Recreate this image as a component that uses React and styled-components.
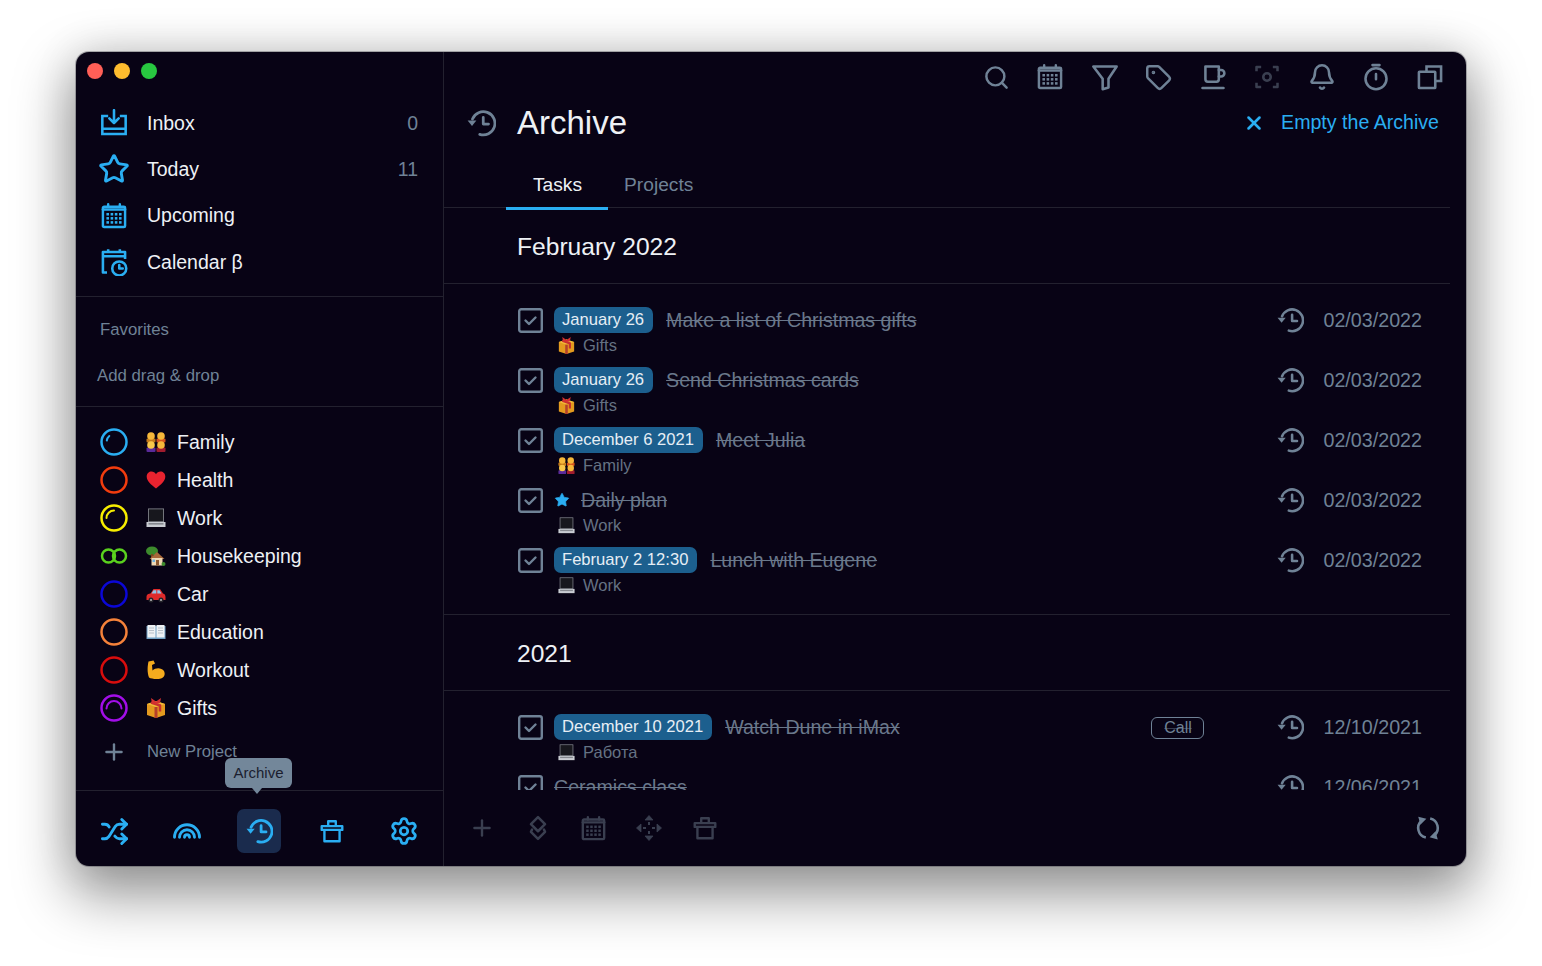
import React from "react";
import styled, { createGlobalStyle } from "styled-components";
import { Search, Tag, Bell, Plus, X, Shuffle, Rainbow, Settings, Star } from "lucide-react";

const BLUE = "#2aaef2";
const GREY = "#6f8296";
const DIM = "#3a3f50";
const LINE = "#23212f";
const BG = "#080315";

const Global = createGlobalStyle`
  html, body { margin: 0; padding: 0; background: #fff; }
  body { font-family: "Liberation Sans", Arial, sans-serif; overflow: hidden; }
  * { box-sizing: border-box; }
`;
const Page = styled.div`
  width: 1542px;
  height: 966px;
  padding: 52px 76px 100px;
`;
const Window = styled.div`
  width: 1390px;
  height: 814px;
  display: grid;
  grid-template-columns: 368px 1fr;
  background: ${BG};
  border-radius: 13px;
  box-shadow: 0 0 0 1px rgba(60, 60, 70, 0.35), 0 24px 56px 6px rgba(0, 0, 0, 0.4), 0 0 44px rgba(0, 0, 0, 0.12);
  overflow: hidden;
`;
const Sidebar = styled.aside`
  display: flex;
  flex-direction: column;
  border-right: 1px solid ${LINE};
  min-height: 0;
`;
const Lights = styled.div`
  height: 37px;
  padding-left: 11px;
  display: flex;
  align-items: center;
  gap: 11px;
`;
const Light = styled.span`
  width: 16px;
  height: 16px;
  border-radius: 50%;
  background: ${(p) => p.$c};
`;
const Nav = styled.nav`
  padding: 11px 0 11px;
  border-bottom: 1px solid ${LINE};
`;
const NavRow = styled.div`
  height: 46.3px;
  padding: 0 25px 0 24px;
  display: flex;
  align-items: center;
  color: #eef1f5;
  font-size: 19.5px;
  svg { flex: none; color: ${BLUE}; }
`;
const NavLabel = styled.span`
  margin-left: 19px;
  flex: 1;
`;
const StarSlot = styled.span`
  width: 28px;
  height: 28px;
  display: flex;
  align-items: center;
  justify-content: center;
  flex: none;
`;
const Count = styled.span`
  color: ${GREY};
  font-size: 19.5px;
`;
const Favorites = styled.section`
  padding: 10px 0 7px;
  border-bottom: 1px solid ${LINE};
`;
const FavRow = styled.div`
  height: 46px;
  display: flex;
  align-items: center;
  padding-left: ${(p) => p.$left}px;
  color: ${GREY};
  font-size: 16.8px;
`;
const Projects = styled.section`
  padding: 16px 0 0 24px;
  flex: 1;
`;
const ProjectRow = styled.div`
  height: 38px;
  display: flex;
  align-items: center;
  color: #eef1f5;
  font-size: 19.5px;
`;
const EmojiSlot = styled.span`
  width: 20px;
  height: 20px;
  margin-left: 18px;
  margin-right: 11px;
  display: inline-flex;
`;
const NewProject = styled.div`
  height: 38px;
  margin-top: 6px;
  display: flex;
  align-items: center;
  color: ${GREY};
  font-size: 16.7px;
  svg { margin: 0 20px 0 1px; }
`;
const BottomBar = styled.div`
  height: 76px;
  border-top: 1px solid ${LINE};
  padding: 18px 17px 0 16px;
  display: flex;
  justify-content: space-between;
  align-items: flex-start;
`;
const BarButton = styled.div`
  position: relative;
  width: 44px;
  height: 44px;
  border-radius: 7px;
  display: flex;
  align-items: center;
  justify-content: center;
  color: ${BLUE};
  background: ${(p) => (p.$active ? "#1a2b4d" : "transparent")};
`;
const Tooltip = styled.div`
  position: absolute;
  left: -12px;
  top: -51px;
  width: 67px;
  height: 30px;
  padding-bottom: 2px;
  border-radius: 6px;
  background: #73879a;
  color: #1b1e2f;
  font-size: 15px;
  display: flex;
  align-items: center;
  justify-content: center;
  &::after {
    content: "";
    position: absolute;
    left: 27px;
    bottom: -6px;
    border-left: 5px solid transparent;
    border-right: 5px solid transparent;
    border-top: 6px solid #73879a;
  }
`;
const Main = styled.main`
  display: flex;
  flex-direction: column;
  min-height: 0;
  min-width: 0;
`;
const TopBar = styled.div`
  height: 50px;
  padding-right: 22px;
  display: flex;
  justify-content: flex-end;
  align-items: center;
  gap: 26.25px;
  color: ${GREY};
`;
const TopIcon = styled.span`
  width: 28px;
  height: 28px;
  display: flex;
  align-items: center;
  justify-content: center;
  color: ${(p) => (p.$dim ? DIM : GREY)};
`;
const Header = styled.header`
  height: 42px;
  padding: 0 27px 0 22px;
  display: flex;
  align-items: center;
  color: ${GREY};
`;
const Title = styled.h1`
  margin: 0 0 0 21px;
  flex: 1;
  font-size: 33px;
  font-weight: 400;
  color: #eef1f5;
`;
const EmptyAction = styled.div`
  display: flex;
  align-items: center;
  gap: 16px;
  color: ${BLUE};
  font-size: 19.6px;
  margin-top: -1px;
`;
const Tabs = styled.div`
  margin: 18px 16px 0 0;
  height: 46px;
  padding-left: 62px;
  display: flex;
  border-bottom: 1px solid ${LINE};
`;
const TabItem = styled.div`
  height: 48px;
  padding: ${(p) => (p.$active ? "0 26px 0 27px" : "0 16px 0")};
  display: flex;
  align-items: center;
  font-size: 19.2px;
  color: ${(p) => (p.$active ? "#eef1f5" : GREY)};
  border-bottom: 3px solid ${(p) => (p.$active ? BLUE : "transparent")};
`;
const Scroll = styled.div`
  flex: 1;
  min-height: 0;
  overflow: hidden;
  padding-right: 16px;
`;
const SectionHead = styled.h2`
  margin: 0;
  height: 76px;
  padding: 3px 0 0 73px;
  display: flex;
  align-items: center;
  font-size: 24.6px;
  font-weight: 400;
  color: #eef1f5;
  border-bottom: 1px solid ${LINE};
`;
const Rows = styled.div`
  padding: 23px 28px 7px 74px;
  border-bottom: ${(p) => (p.$last ? "none" : `1px solid ${LINE}`)};
`;
const Row = styled.div`
  height: 60px;
  display: flex;
  align-items: flex-start;
`;
const Check = styled.span`
  width: 25px;
  height: 26px;
  margin-right: 11px;
  flex: none;
  display: flex;
  align-items: center;
  color: ${GREY};
`;
const Body = styled.div`
  flex: 1;
  min-width: 0;
`;
const TopLine = styled.div`
  height: 26px;
  display: flex;
  align-items: center;
  gap: 13px;
`;
const Pill = styled.span`
  height: 26px;
  padding: 0 9px 0 8px;
  border-radius: 7px;
  background: #1c5f8e;
  color: #e6eef5;
  font-size: 16.6px;
  display: flex;
  align-items: center;
`;
const StarMark = styled.span`
  width: 16px;
  display: flex;
  color: ${BLUE};
  margin-right: -2px;
`;
const TaskTitle = styled.span`
  font-size: 19.6px;
  color: #6a788b;
  text-decoration: line-through;
`;
const SubLine = styled.div`
  height: 24px;
  padding-left: 4px;
  display: flex;
  align-items: center;
  gap: 8px;
  font-size: 16.5px;
  color: #657283;
`;
const TagChip = styled.span`
  width: 53px;
  height: 22px;
  margin: 3px 72px 0 0;
  flex: none;
  border: 1.5px solid ${GREY};
  border-radius: 6px;
  color: ${GREY};
  font-size: 16px;
  display: flex;
  align-items: center;
  justify-content: center;
  text-decoration: line-through;
  text-decoration-color: rgba(111, 130, 150, 0.45);
`;
const Done = styled.div`
  height: 26px;
  flex: none;
  display: flex;
  align-items: center;
  gap: 19px;
  color: ${GREY};
  font-size: 19.7px;
`;
const Toolbar = styled.div`
  height: 76px;
  padding: 0 25px;
  display: flex;
  align-items: center;
  gap: 29.7px;
  color: ${DIM};
`;
const ToolIcon = styled.span`
  width: 26px;
  height: 26px;
  display: flex;
  align-items: center;
  justify-content: center;
`;
const Refresh = styled.span`
  margin-left: auto;
  display: flex;
  color: ${GREY};
`;

const Svg = ({ s = 28, sw = 2.2, children, vb = 24 }) => (
  <svg width={s} height={s} viewBox={`0 0 ${vb} ${vb}`} fill="none" stroke="currentColor" strokeWidth={sw} strokeLinecap="round" strokeLinejoin="round" style={{ flex: "none" }}>
    {children}
  </svg>
);
const HistoryIcon = ({ s = 28, sw = 2.2 }) => (
  <Svg s={s} sw={sw}>
    <path d="M5.2 8.800A9.300 9.300 0 1 1 11 21.100" />
    <path d="M1.300 10h7l-3.500 4.300z" fill="currentColor" stroke="none" />
    <path d="M13.800 7.500v5.300h4.200" />
  </Svg>
);
const InboxIcon = () => (
  <Svg s={28}>
    <path d="M7 6H2v15.500h20V6h-5" strokeLinecap="butt" strokeLinejoin="miter" />
    <path d="M2 17h20" strokeLinecap="butt" />
    <path d="M12 1v10M8 8l4 4 4-4" />
  </Svg>
);
const CalGrid = ({ s = 28, sw = 2.1 }) => (
  <Svg s={s} sw={sw}>
    <rect x="2.500" y="4" width="19" height="17.500" rx="1" />
    <path d="M7 2v2M17 2v2" />
    <path d="M2.500 6.500h19" />
    <g fill="currentColor" stroke="none">
      {[6.600, 10.200, 13.800, 17.400].map((x) => [10.500, 14, 17.500].map((y) => <rect key={x + "-" + y} x={x - 1.1} y={y - 1.1} width="2.200" height="2.200" />))}
    </g>
  </Svg>
);
const CalClock = () => (
  <Svg s={28}>
    <path d="M6 21H2.500V3.500h19v6M2.500 7h19M7 1v2.500M17 1v2.500" strokeLinecap="butt" />
    <circle cx="16.500" cy="17.500" r="6" />
    <path d="M16.500 14.500v3H19.500" />
  </Svg>
);
const FilterIcon = () => (
  <Svg s={28}>
    <path d="M2 3h20l-7 10.500V21l-5 1.500V13.500z" />
  </Svg>
);
const CupIcon = () => (
  <Svg s={28}>
    <path d="M5.500 3h11.500v11a2 2 0 0 1-2 2H7.500a2 2 0 0 1-2-2z" />
    <path d="M17 6h2a2.500 2.500 0 0 1 0 5.500h-2" />
    <path d="M3 21.500h18" />
  </Svg>
);
const FrameIcon = () => (
  <Svg s={28}>
    <path d="M3 7V3.500h4M17 3.500h4V7M21 17v3.500h-4M7 20.500H3V17" strokeLinecap="butt" />
    <circle cx="12" cy="12" r="3.200" />
  </Svg>
);
const TimerIcon = () => (
  <Svg s={28}>
    <circle cx="12" cy="13.500" r="9" />
    <path d="M9 1.800h6M12 9.500v4.500" />
  </Svg>
);
const CopyIcon = () => (
  <Svg s={28}>
    <path d="M9 7.500V3h12.500v12.500H16.500" strokeLinejoin="miter" strokeLinecap="butt" />
    <rect x="2.500" y="7.500" width="14" height="14" rx="0.500" />
  </Svg>
);
const TrashBox = ({ s = 26 }) => (
  <Svg s={s} sw={2.2}>
    <path d="M2.500 7.500h19v3.500h-19zM5 11v10.500h14V11M8.500 7.500V3h7v4.500" />
  </Svg>
);
const DiamondsIcon = () => (
  <Svg s={26} sw={2.3}>
    <path d="M12 2l6.500 6.500L12 15 5.500 8.500z" />
    <path d="M6.500 13.500L5.500 15.500 12 22l6.500-6.500-1-2" />
  </Svg>
);
const MoveIcon = () => (
  <svg width="30" height="30" viewBox="0 0 30 30" fill="currentColor" stroke="currentColor" strokeWidth="2" style={{ flex: "none" }}>
    <path d="M15 2.500l4 4.500h-8zM15 27.500l4-4.500h-8zM2.500 15l4.500-4v8zM27.500 15l-4.500-4v8z" strokeWidth="0.800" />
    <path d="M9 15h3M18 15h3M15 9v3M15 18v3" />
  </svg>
);
const RefreshIcon = () => (
  <Svg s={26} sw={2.400}>
    <path d="M10 20.800A9 9 0 0 1 6 5.300" strokeLinecap="butt" />
    <path d="M3 1.500l7.500 2L5 9z" fill="currentColor" stroke="none" />
    <path d="M14 3.200A9 9 0 0 1 18 18.700" strokeLinecap="butt" />
    <path d="M21 22.500l-7.500-2L19 15z" fill="currentColor" stroke="none" />
  </Svg>
);
const CheckBox = () => (
  <svg width="25" height="25" viewBox="0 0 25 25" fill="none" stroke="currentColor" strokeWidth="2.400" strokeLinecap="round" strokeLinejoin="round">
    <rect x="1.200" y="1.200" width="22.600" height="22.600" rx="2" />
    <path d="M7.500 12.500l3.500 3.500 6.500-6.500" />
  </svg>
);
const Ring = ({ color, arc, double }) => (
  <svg width="28" height="28" viewBox="0 0 28 28" fill="none" stroke={color} strokeWidth="2.500" strokeLinecap="round" style={{ flex: "none" }}>
    {double ? (
      <>
        <circle cx="8.500" cy="14" r="6.500" />
        <circle cx="19.500" cy="14" r="6.500" />
      </>
    ) : (
      <>
        <circle cx="14" cy="14" r="12.500" />
        {arc && <path d={arc} strokeWidth="2" />}
      </>
    )}
  </svg>
);

const E = ({ children, s = 20 }) => (
  <svg width={s} height={s} viewBox="0 0 20 20" style={{ flex: "none" }}>
    {children}
  </svg>
);
const Emoji = ({ name, s }) => {
  switch (name) {
    case "family":
      return (
        <E s={s}>
          <rect x="0.500" y="6.500" width="9" height="4" rx="1" fill="#c47a1a" />
          <rect x="10.500" y="6.500" width="9" height="4" rx="1" fill="#d4531c" />
          <rect x="0.500" y="15.500" width="9" height="4.500" rx="1" fill="#5a2a9a" />
          <rect x="10.500" y="15.500" width="9" height="4.500" rx="1" fill="#a01c2e" />
          <circle cx="5" cy="4" r="3.800" fill="#f6b83a" />
          <circle cx="15" cy="4" r="3.800" fill="#f6b83a" />
          <circle cx="5" cy="13" r="3.800" fill="#f8c74a" />
          <circle cx="15" cy="13" r="3.800" fill="#f6b83a" />
        </E>
      );
    case "heart":
      return (
        <E s={s}>
          <path d="M10 18.500C5 14.500 .7 11 .7 6.500 .7 3.500 3 1.500 5.500 1.500c1.900 0 3.500 1 4.500 2.800 1-1.800 2.600-2.800 4.500-2.800 2.500 0 4.800 2 4.800 5 0 4.500-4.300 8-9.300 12z" fill="#e8232f" />
        </E>
      );
    case "laptop":
      return (
        <E s={s}>
          <rect x="2" y="0.500" width="16" height="13.500" fill="#8a8d94" />
          <rect x="2.800" y="1.300" width="14.400" height="12" fill="#17171d" />
          <path d="M0.500 14h19v5H0.500z" fill="#c9ccd2" />
          <rect x="2.500" y="15" width="15" height="1.600" fill="#85888f" />
        </E>
      );
    case "house":
      return (
        <E s={s}>
          <ellipse cx="6" cy="5" rx="6" ry="4.500" fill="#3d8b2d" />
          <rect x="5" y="8" width="2" height="6" fill="#7a4a20" />
          <path d="M11 6l7.500 7H3.500z" fill="#a8683a" />
          <rect x="5.500" y="12" width="11" height="7.500" fill="#efd9b4" />
          <rect x="10" y="14" width="3" height="5.500" fill="#8d5a30" />
          <rect x="6.500" y="13.500" width="2.500" height="2.500" fill="#6fb3e0" />
          <circle cx="17.500" cy="18" r="2" fill="#3d8b2d" />
        </E>
      );
    case "car":
      return (
        <E s={s}>
          <path d="M.5 12.500c0-2 2-3 4-3l3-4.500h6.500l3 4.500c1.500.3 2.500 1.500 2.500 3.500v3H.5z" fill="#df2a2a" />
          <path d="M7.500 6.200h2.800v3.300H5.500zM11.300 6.200h2.200l2 3.300h-4.200z" fill="#8fc4e8" />
          <circle cx="5" cy="16" r="2.500" fill="#26262c" />
          <circle cx="15" cy="16" r="2.500" fill="#26262c" />
          <circle cx="5" cy="16" r="1" fill="#bbb" />
          <circle cx="15" cy="16" r="1" fill="#bbb" />
        </E>
      );
    case "book":
      return (
        <E s={s}>
          <path d="M.5 4h19v13h-19z" fill="#6f9fc4" />
          <path d="M1.500 3h8v12.500h-8zM10.500 3h8v12.500h-8z" fill="#eef1f4" />
          <path d="M3 6h5M3 8.500h5M3 11h5M12 6h5M12 8.500h5M12 11h5" stroke="#b8c0c8" strokeWidth="1" />
        </E>
      );
    case "muscle":
      return (
        <E s={s}>
          <path d="M2.500 1.500l5-1 1.500 3-3 1.500.5 5.500c3-3 9-3 11.500.5 1.500 3 .5 6.500-3 7.500-4 1-9.500 .5-12-1C1 12 1.500 6 2.500 1.500z" fill="#f4ab1e" />
        </E>
      );
    default:
      return (
        <E s={s}>
          <path d="M1 6l9-3 9 3v11l-9 3-9-3z" fill="#e39a1f" />
          <path d="M1 6l9 3 9-3-9-3z" fill="#f2bc3a" />
          <path d="M10 9v11" stroke="#b5402a" strokeWidth="3" />
          <path d="M5 4.500l9 3v6" stroke="#c92f2f" strokeWidth="2.500" fill="none" />
          <path d="M5 0l5 3.500 5-3.500-1 5-4 1-4-1z" fill="#d43030" />
        </E>
      );
  }
};

const projects = [
  { label: "Family", emoji: "family", color: "#2aaef2", arc: "M6.800 12.500a7.500 7.500 0 0 1 2.500-4.500" },
  { label: "Health", emoji: "heart", color: "#f23c0e" },
  { label: "Work", emoji: "laptop", color: "#f7ee00", arc: "M6.500 14a7.500 7.500 0 0 1 7.500-7.500" },
  { label: "Housekeeping", emoji: "house", color: "#5ad11e", double: true },
  { label: "Car", emoji: "car", color: "#0b07d6" },
  { label: "Education", emoji: "book", color: "#f5823a" },
  { label: "Workout", emoji: "muscle", color: "#d80d0d" },
  { label: "Gifts", emoji: "gift", color: "#a20ee8", arc: "M6.500 14.500a7.500 7.500 0 0 1 15 0" },
];
const feb = [
  { date: "January 26", title: "Make a list of Christmas gifts", emoji: "gift", sub: "Gifts" },
  { date: "January 26", title: "Send Christmas cards", emoji: "gift", sub: "Gifts" },
  { date: "December 6 2021", title: "Meet Julia", emoji: "family", sub: "Family" },
  { star: true, title: "Daily plan", emoji: "laptop", sub: "Work" },
  { date: "February 2 12:30", title: "Lunch with Eugene", emoji: "laptop", sub: "Work" },
];
const y2021 = [
  { date: "December 10 2021", title: "Watch Dune in iMax", emoji: "laptop", sub: "Работа", tag: "Call", done: "12/10/2021" },
  { title: "Ceramics class", done: "12/06/2021" },
];

const Task = ({ t }) => (
  <Row>
    <Check><CheckBox /></Check>
    <Body>
      <TopLine>
        {t.date && <Pill>{t.date}</Pill>}
        {t.star && (
          <StarMark><Star size={16} fill="currentColor" strokeWidth={1} /></StarMark>
        )}
        <TaskTitle>{t.title}</TaskTitle>
      </TopLine>
      {t.sub && (
        <SubLine>
          <Emoji name={t.emoji} s={17} />
          {t.sub}
        </SubLine>
      )}
    </Body>
    {t.tag && <TagChip>{t.tag}</TagChip>}
    <Done>
      <HistoryIcon />
      {t.done || "02/03/2022"}
    </Done>
  </Row>
);

export default function App() {
  return (
    <Page>
      <Global />
      <Window>
        <Sidebar>
          <Lights>
            <Light $c="#ff5f57" />
            <Light $c="#febc2e" />
            <Light $c="#28c840" />
          </Lights>
          <Nav>
            <NavRow><InboxIcon /><NavLabel>Inbox</NavLabel><Count>0</Count></NavRow>
            <NavRow><StarSlot><Star size={32} strokeWidth={2.2} /></StarSlot><NavLabel>Today</NavLabel><Count>11</Count></NavRow>
            <NavRow><CalGrid /><NavLabel>Upcoming</NavLabel></NavRow>
            <NavRow><CalClock /><NavLabel>Calendar β</NavLabel></NavRow>
          </Nav>
          <Favorites>
            <FavRow $left={24}>Favorites</FavRow>
            <FavRow $left={21}>Add drag &amp; drop</FavRow>
          </Favorites>
          <Projects>
            {projects.map((p) => (
              <ProjectRow key={p.label}>
                <Ring color={p.color} arc={p.arc} double={p.double} />
                <EmojiSlot><Emoji name={p.emoji} /></EmojiSlot>
                {p.label}
              </ProjectRow>
            ))}
            <NewProject><Plus size={26} strokeWidth={2.2} />New Project</NewProject>
          </Projects>
          <BottomBar>
            <BarButton><Shuffle size={29} strokeWidth={2.4} /></BarButton>
            <BarButton><Rainbow size={30} strokeWidth={2.3} /></BarButton>
            <BarButton $active>
              <Tooltip>Archive</Tooltip>
              <HistoryIcon s={28} sw={2.400} />
            </BarButton>
            <BarButton><TrashBox s={26} /></BarButton>
            <BarButton><Settings size={30} strokeWidth={2.2} /></BarButton>
          </BottomBar>
        </Sidebar>
        <Main>
          <TopBar>
            <TopIcon><Search size={27} strokeWidth={2.2} /></TopIcon>
            <TopIcon><CalGrid /></TopIcon>
            <TopIcon><FilterIcon /></TopIcon>
            <TopIcon><Tag size={27} strokeWidth={2.2} /></TopIcon>
            <TopIcon><CupIcon /></TopIcon>
            <TopIcon $dim><FrameIcon /></TopIcon>
            <TopIcon><Bell size={28} strokeWidth={2.2} /></TopIcon>
            <TopIcon><TimerIcon /></TopIcon>
            <TopIcon><CopyIcon /></TopIcon>
          </TopBar>
          <Header>
            <HistoryIcon s={30} />
            <Title>Archive</Title>
            <EmptyAction>
              <X size={22} strokeWidth={2.800} style={{ marginLeft: -1 }} />
              Empty the Archive
            </EmptyAction>
          </Header>
          <Tabs>
            <TabItem $active>Tasks</TabItem>
            <TabItem>Projects</TabItem>
          </Tabs>
          <Scroll>
            <SectionHead>February 2022</SectionHead>
            <Rows>{feb.map((t) => <Task key={t.title} t={t} />)}</Rows>
            <SectionHead>2021</SectionHead>
            <Rows $last>{y2021.map((t) => <Task key={t.title} t={t} />)}</Rows>
          </Scroll>
          <Toolbar>
            <ToolIcon><Plus size={26} strokeWidth={2.2} /></ToolIcon>
            <ToolIcon><DiamondsIcon /></ToolIcon>
            <ToolIcon><CalGrid s={27} /></ToolIcon>
            <ToolIcon><MoveIcon /></ToolIcon>
            <ToolIcon><TrashBox /></ToolIcon>
            <Refresh><RefreshIcon /></Refresh>
          </Toolbar>
        </Main>
      </Window>
    </Page>
  );
}
